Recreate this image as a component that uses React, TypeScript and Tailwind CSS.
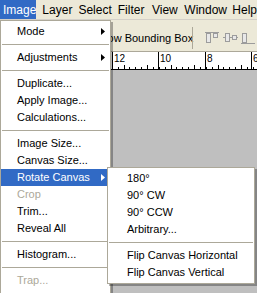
import React from "react";

const font = { fontFamily: '"Liberation Sans", Arial, sans-serif' };

function Arrow({ white }: { white?: boolean }) {
  return (
    <svg width="4" height="7" viewBox="0 0 4 7" className="block">
      <path d="M0 0 L4 3.5 L0 7 Z" fill={white ? "#ffffff" : "#000000"} />
    </svg>
  );
}

type Row =
  | { sep: true }
  | { label: string; arrow?: boolean; disabled?: boolean; active?: boolean };

const mainRows: Row[] = [
  { label: "Mode", arrow: true },
  { sep: true },
  { label: "Adjustments", arrow: true },
  { sep: true },
  { label: "Duplicate..." },
  { label: "Apply Image..." },
  { label: "Calculations..." },
  { sep: true },
  { label: "Image Size..." },
  { label: "Canvas Size..." },
  { label: "Rotate Canvas", arrow: true, active: true },
  { label: "Crop", disabled: true },
  { label: "Trim..." },
  { label: "Reveal All" },
  { sep: true },
  { label: "Histogram..." },
  { sep: true },
  { label: "Trap...", disabled: true },
];

const subRows: Row[] = [
  { label: "180°" },
  { label: "90° CW" },
  { label: "90° CCW" },
  { label: "Arbitrary..." },
  { sep: true },
  { label: "Flip Canvas Horizontal" },
  { label: "Flip Canvas Vertical" },
];

function MenuRows({ rows, pl }: { rows: Row[]; pl: string }) {
  return (
    <>
      {rows.map((r, i) =>
        "sep" in r ? (
          <div key={i} className="h-[9px] flex items-center px-[1px]">
            <div className="h-px w-full bg-[#aca899]" />
          </div>
        ) : (
          <div
            key={i}
            className={`h-[17px] flex items-center ${pl} pr-[5px] ${
              r.active ? "bg-[#316ac5] text-white" : r.disabled ? "text-[#aca899]" : "text-black"
            }`}
          >
            <span className="flex-1 whitespace-nowrap leading-none">{r.label}</span>
            {r.arrow && <Arrow white={r.active} />}
          </div>
        )
      )}
    </>
  );
}

function AlignIcon({ kind }: { kind: number }) {
  return (
    <svg width="16" height="14" viewBox="0 0 16 14" className="block">
      {kind === 0 && (
        <>
          <line x1="0" y1="1.5" x2="14" y2="1.5" stroke="#9c9c9c" />
          <rect x="1.5" y="2.5" width="4" height="9" fill="#e8e8e8" stroke="#9c9c9c" />
          <rect x="8.5" y="2.5" width="4" height="4" fill="#e8e8e8" stroke="#9c9c9c" />
        </>
      )}
      {kind === 1 && (
        <>
          <line x1="0" y1="6.5" x2="15" y2="6.5" stroke="#9c9c9c" />
          <rect x="2.5" y="2.5" width="4" height="8" fill="#e8e8e8" stroke="#9c9c9c" />
          <rect x="9.5" y="4.5" width="4" height="4" fill="#e8e8e8" stroke="#9c9c9c" />
        </>
      )}
      {kind === 2 && (
        <>
          <line x1="0" y1="12.5" x2="14" y2="12.5" stroke="#9c9c9c" />
          <rect x="1.5" y="2.5" width="4" height="9" fill="#e8e8e8" stroke="#9c9c9c" />
        </>
      )}
    </svg>
  );
}

function Ruler() {
  const majors = [
    { x: 112, n: "12" },
    { x: 158, n: "10" },
    { x: 205, n: "8" },
    { x: 251, n: "6" },
  ];
  const ticks: number[] = [];
  for (let x = 100; x < 257; x += 5.875) ticks.push(x);
  return (
    <svg width="257" height="18" viewBox="0 0 257 18" className="block">
      <rect x="0" y="0" width="257" height="18" fill="#ffffff" />
      {ticks.map((x, i) => {
        const rx = Math.round(x) + 0.5;
        const h = i % 4 === 0 ? 5 : 3;
        return <line key={i} x1={rx} y1={18 - h} x2={rx} y2={18} stroke="#000" />;
      })}
      {majors.map((m) => (
        <g key={m.n}>
          <line x1={m.x + 0.5} y1={0} x2={m.x + 0.5} y2={18} stroke="#000" />
          <text x={m.x + 2} y={10} fontSize="10" fontFamily="Liberation Sans, Arial, sans-serif" fill="#000">
            {m.n}
          </text>
        </g>
      ))}
      <line x1="0" y1="17.5" x2="257" y2="17.5" stroke="#000" />
    </svg>
  );
}

export default function App() {
  return (
    <div className="relative w-[257px] h-[293px] overflow-hidden bg-[#bfbfbf] text-[11px]" style={font}>
      {/* menu bar */}
      <div className="h-[20px] bg-[#ece9d8] flex items-stretch text-[12px] text-black border-b border-[#d4d0c8]">
        <div className="w-[38px] pl-[3px] bg-[#316ac5] text-white flex items-center">Image</div>
        <div className="w-[39px] pl-[6px] flex items-center">Layer</div>
        <div className="w-[40px] pl-[6px] flex items-center">Select</div>
        <div className="w-[37px] pl-[6px] flex items-center">Filter</div>
        <div className="w-[35px] pl-[6px] flex items-center">View</div>
        <div className="w-[48px] pl-[6px] flex items-center">Window</div>
        <div className="pl-[6px] flex items-center">Help</div>
      </div>
      {/* options bar */}
      <div className="h-[32px] bg-[#ece9d8] flex items-center border-b border-[#aca899]">
        <div className="w-[101px]" />
        <div className="w-[98px] whitespace-nowrap text-[11px] pt-[6px]">Show Bounding Box</div>
        <div className="w-px h-[22px] bg-[#aca899] mt-[4px]" />
        <div className="ml-[12px] mt-[4px] flex gap-[2px]">
          <AlignIcon kind={0} />
          <AlignIcon kind={1} />
          <AlignIcon kind={2} />
        </div>
      </div>
      <Ruler />

      {/* Image menu */}
      <div className="absolute left-0 top-[20px] w-[111px] h-[280px] bg-white border border-[#aca899] pt-[2px] shadow-[2px_2px_0_rgba(0,0,0,0.3)] text-[11px]">
        <MenuRows rows={mainRows} pl="pl-[16px]" />
      </div>

      {/* Rotate Canvas submenu */}
      <div className="absolute left-[107px] top-[167px] w-[148px] bg-white border border-[#aca899] py-[2px] shadow-[2px_2px_0_rgba(0,0,0,0.3)] text-[11px]">
        <MenuRows rows={subRows} pl="pl-[19px]" />
      </div>
    </div>
  );
}
